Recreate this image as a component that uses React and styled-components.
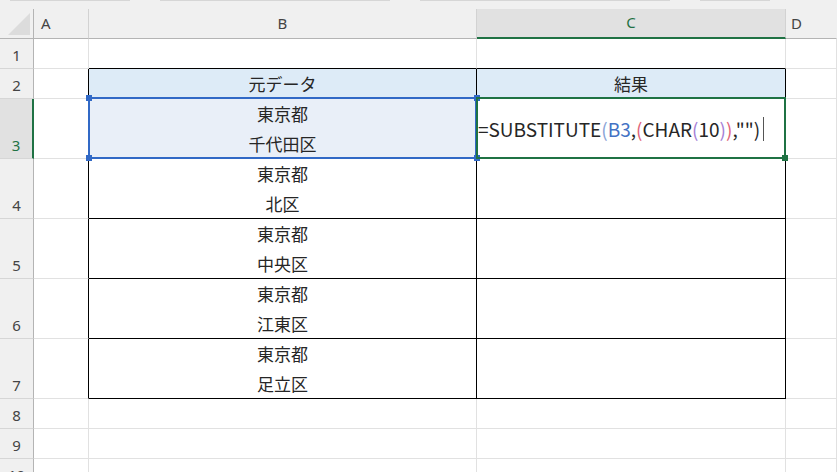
import React from "react";
import styled, { createGlobalStyle } from "styled-components";

const GlobalStyle = createGlobalStyle`
  html, body { margin: 0; padding: 0; background: #ffffff; overflow: hidden; }
  * { box-sizing: border-box; }
`;

const JP = `"Noto Sans CJK JP", "Noto Sans", sans-serif`;
const UI = `"Noto Sans", "Liberation Sans", sans-serif`;
const GREEN = "#1f7244";
const BLUE = "#3169c6";
const GRID = "#e1e1e1";
const HEADLINE = "#b4b4b4";

const Sheet = styled.div`
  position: relative;
  width: 837px;
  height: 472px;
  overflow: hidden;
  background: #ffffff;
  font-family: ${JP};
`;

const TopStrip = styled.div`
  height: 9px;
  background: #f0f0f0;
  display: flex;
  gap: 30px;
  padding-left: 10px;
`;

const StripSeg = styled.div`
  height: 1px;
  width: ${(p) => p.$w}px;
  background: #d6d6d6;
`;

const Grid = styled.div`
  display: grid;
  grid-template-columns: 34px 55px 388px 309px 1fr;
  grid-template-rows: 30px 30px 30px 60px 60px 60px 60px 60px 30px 30px 30px;
`;

const ColHead = styled.div`
  background: ${(p) => (p.$active ? "#e1e1e1" : "#f0f0f0")};
  border-right: 1px solid ${(p) => (p.$last ? "transparent" : "#d2d2d2")};
  border-bottom: ${(p) => (p.$active ? `2px solid ${GREEN}` : `1px solid ${HEADLINE}`)};
  color: ${(p) => (p.$active ? GREEN : "#444444")};
  font-family: ${UI};
  font-size: 15px;
  display: flex;
  align-items: center;
  justify-content: ${(p) => (p.$left ? "flex-start" : "center")};
  padding-left: ${(p) => p.$pl || 0}px;
  padding-bottom: 2px;
`;

const Corner = styled.div`
  background: #f0f0f0;
  border-right: 1px solid ${HEADLINE};
  border-bottom: 1px solid ${HEADLINE};
  display: flex;
  align-items: flex-end;
  justify-content: flex-end;
  padding: 0 3px 3px 0;
`;

const RowHead = styled.div`
  background: ${(p) => (p.$active ? "#e1e1e1" : "#f0f0f0")};
  border-right: ${(p) => (p.$active ? `2px solid ${GREEN}` : `1px solid ${HEADLINE}`)};
  border-bottom: 1px solid #d6d6d6;
  color: ${(p) => (p.$active ? GREEN : "#444444")};
  font-family: ${UI};
  font-size: 15px;
  display: flex;
  align-items: flex-end;
  justify-content: center;
  padding-bottom: 3px;
  line-height: 20px;
`;

const Cell = styled.div`
  background: ${(p) => p.$bg || "#ffffff"};
  border-right: 1px solid ${(p) => p.$r || GRID};
  border-bottom: 1px solid ${(p) => p.$b || GRID};
  display: flex;
  flex-direction: column;
  align-items: ${(p) => (p.$left ? "flex-start" : "center")};
  justify-content: center;
  color: #262626;
  font-size: 17px;
  line-height: 30px;
  white-space: nowrap;
  overflow: visible;
  padding-left: ${(p) => (p.$left ? 1 : 0)}px;
`;

const Formula = styled.div`
  display: flex;
  align-items: center;
  font-family: ${JP};
  font-size: 19px;
  color: #262626;
`;

const Tok = styled.span`
  color: ${(p) => p.$c || "#262626"};
`;

const Caret = styled.span`
  display: inline-block;
  width: 1px;
  height: 24px;
  background: #555;
  margin-left: 3px;
`;

const Sel = styled.div`
  position: absolute;
  left: ${(p) => p.$x}px;
  top: ${(p) => p.$y}px;
  width: ${(p) => p.$w}px;
  height: ${(p) => p.$h}px;
  border: 2px solid ${(p) => p.$c};
  pointer-events: none;
`;

const Handle = styled.div`
  position: absolute;
  width: 6px;
  height: 6px;
  background: ${(p) => p.$c};
  left: ${(p) => p.$x}px;
  top: ${(p) => p.$y}px;
`;

const BLACK = "#000000";
const HDR_BG = "#ddebf7";

const data = [
  ["東京都", "北区"],
  ["東京都", "中央区"],
  ["東京都", "江東区"],
  ["東京都", "足立区"],
];

function CornerTriangle() {
  return (
    <svg width="22" height="22" viewBox="0 0 22 22">
      <polygon points="22,0 22,22 0,22" fill="#dcdcdc" />
    </svg>
  );
}

export default function App() {
  return (
    <>
      <GlobalStyle />
      <Sheet>
        <TopStrip>
          <StripSeg $w={120} />
          <StripSeg $w={230} />
          <StripSeg $w={250} />
          <StripSeg $w={70} />
        </TopStrip>
        <Grid>
          <Corner>
            <CornerTriangle />
          </Corner>
          <ColHead $left $pl={7}>A</ColHead>
          <ColHead>B</ColHead>
          <ColHead $active>C</ColHead>
          <ColHead $left $pl={5} $last>D</ColHead>

          {/* row 1 */}
          <RowHead>1</RowHead>
          <Cell />
          <Cell $b={BLACK} />
          <Cell $b={BLACK} />
          <Cell />

          {/* row 2 */}
          <RowHead>2</RowHead>
          <Cell $r={BLACK} />
          <Cell $bg={HDR_BG} $r={BLACK} $b={BLACK}>元データ</Cell>
          <Cell $bg={HDR_BG} $r={BLACK} $b={BLACK}>結果</Cell>
          <Cell />

          {/* row 3 */}
          <RowHead $active>3</RowHead>
          <Cell $r={BLACK} />
          <Cell $bg="#e9eff8" $r={BLACK} $b={BLACK}>
            <span>東京都</span>
            <span>千代田区</span>
          </Cell>
          <Cell $left $r={BLACK} $b={BLACK}>
            <Formula>
              <Tok>=SUBSTITUTE</Tok>
              <Tok $c="#8aa4d6">(</Tok>
              <Tok $c="#4472c4">B3</Tok>
              <Tok>,</Tok>
              <Tok $c="#e0637a">(</Tok>
              <Tok>CHAR</Tok>
              <Tok $c="#a57fd6">(</Tok>
              <Tok>10</Tok>
              <Tok $c="#a57fd6">)</Tok>
              <Tok $c="#e0637a">)</Tok>
              <Tok>,""</Tok>
              <Tok>)</Tok>
              <Caret />
            </Formula>
          </Cell>
          <Cell />

          {data.map((d, i) => (
            <React.Fragment key={i}>
              <RowHead>{i + 4}</RowHead>
              <Cell $r={BLACK} />
              <Cell $r={BLACK} $b={BLACK}>
                <span>{d[0]}</span>
                <span>{d[1]}</span>
              </Cell>
              <Cell $r={BLACK} $b={BLACK} />
              <Cell />
            </React.Fragment>
          ))}

          {[8, 9, 10].map((n) => (
            <React.Fragment key={n}>
              <RowHead>{n}</RowHead>
              <Cell />
              <Cell />
              <Cell />
              <Cell />
            </React.Fragment>
          ))}
        </Grid>

        <Sel $x={88} $y={97} $w={389} $h={62} $c={BLUE} />
        <Handle $c={BLUE} $x={86} $y={95} />
        <Handle $c={BLUE} $x={86} $y={155} />
        <Handle $c={BLUE} $x={474} $y={95} />
        <Handle $c={BLUE} $x={474} $y={155} />
        <Sel $x={476} $y={97} $w={310} $h={62} $c={GREEN} />
        <Handle $c={GREEN} $x={782} $y={155} />
      </Sheet>
    </>
  );
}
